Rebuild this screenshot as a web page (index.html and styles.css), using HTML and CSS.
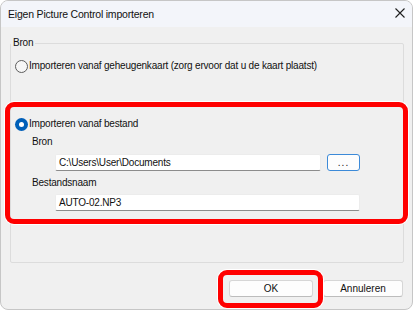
FILE: index.html
```html
<!DOCTYPE html>
<html lang="nl">
<head>
  <meta charset="UTF-8" />
  <title>Eigen Picture Control importeren</title>
  <link rel="stylesheet" href="styles.css">
</head>
<body>
  <div class="window">
    <!-- titelbalk -->
    <div class="titlebar">
      <span class="title">Eigen Picture Control importeren</span>
      <svg class="close" viewBox="0 0 10 10" xmlns="http://www.w3.org/2000/svg">
        <path d="M0.5 0.5L9.5 9.5M9.5 0.5L0.5 9.5" stroke="#1f1f1f" stroke-width="1.1" fill="none"/>
      </svg>
    </div>

    <div class="dialog-body">
      <fieldset class="group">
        <legend>Bron</legend>
        <div class="group-content">
          <label class="radio-row"><span class="radio"></span>Importeren vanaf geheugenkaart (zorg ervoor dat u de kaart plaatst)</label>

          <!-- gemarkeerd gedeelte -->
          <div class="highlight-box">
            <label class="radio-row"><span class="radio checked"></span>Importeren vanaf bestand</label>
            <div class="sub-label">Bron</div>
            <div class="field-row">
              <div class="text-input path">C:\Users\User\Documents</div>
              <button class="browse">...</button>
            </div>
            <div class="sub-label second">Bestandsnaam</div>
            <div class="field-row last">
              <div class="text-input file">AUTO-02.NP3</div>
            </div>
          </div>
        </div>
      </fieldset>

      <div class="button-row">
        <span class="ok-wrap"><button class="btn ok">OK</button></span>
        <button class="btn cancel">Annuleren</button>
      </div>
    </div>
  </div>
</body>
</html>
```

FILE: styles.css
```css
/* ===== pagina ===== */
body{margin:0;background:#fff;font-family:"Liberation Sans",Arial,sans-serif;font-size:10px;line-height:16px;
     letter-spacing:-0.2px;color:#111;}

/* ===== venster ===== */
.window{width:413px;height:310px;box-sizing:border-box;border:1px solid #c6c6c6;border-radius:8px;
        background:#f0f0f0;overflow:hidden;}
.titlebar{height:26px;background:#f3f5fa;display:flex;align-items:center;justify-content:space-between;
          padding:0 7px 0 7px;}
.title{font-size:10.5px;color:#111;}
.close{width:10px;height:10px;margin-top:-2px;}

.dialog-body{padding:8px 8px 0 9px;}

/* ===== groep Bron ===== */
.group{margin:0;padding:0;border:1px solid #dcdcdc;border-radius:2px;}
.group legend{padding:0 2px;line-height:16px;}
.group-content{padding:7px 4px 0 4px;}

.radio-row{display:flex;align-items:center;gap:1px;height:16px;white-space:nowrap;}
.radio{width:11px;height:11px;border:1px solid #5c5c5c;border-radius:50%;background:#f6f6f6;flex:none;}
.radio.checked{width:13px;height:13px;border:none;background:#005fb8;position:relative;}
.radio.checked::after{content:"";position:absolute;left:4px;top:4px;width:5px;height:5px;border-radius:50%;background:#fff;}

/* rode markering */
.highlight-box{margin:28px -9px 38px -10px;padding:9px 0 8px 5px;border:5px solid #ff0000;border-radius:9px;
               box-shadow:0 0 0 1px #fff;}
.sub-label{margin:2px 0 0 17px;height:16px;}
.sub-label.second{margin-top:4px;}
.field-row{display:flex;align-items:center;margin:4px 0 0 40px;}
.field-row.last{margin-top:3px;}

.text-input{height:17px;box-sizing:border-box;background:#fff;border:1px solid #ececec;border-bottom:1px solid #8c8c8c;
            border-radius:2px;padding:0 3px;line-height:15px;font-size:10px;}
.text-input.path{width:266px;}
.text-input.file{width:305px;}
.browse{margin-left:6px;width:33px;height:17px;box-sizing:border-box;background:#fdfdfd;border:1px solid #3c8ad8;
        border-radius:3px;padding:0;font:inherit;line-height:10px;letter-spacing:1px;color:#111;}

/* ===== knoppen ===== */
.button-row{display:flex;justify-content:flex-end;margin-top:17px;padding-right:1px;}
.btn{height:17px;box-sizing:border-box;background:#fdfdfd;border:1px solid #d6d6d6;border-bottom-color:#bcbcbc;
     border-radius:3px;padding:0;font:inherit;line-height:14px;color:#111;}
.btn.ok{width:84px;display:block;}
.btn.cancel{width:80px;margin-left:10px;}
.ok-wrap{position:relative;display:block;}
.ok-wrap::after{content:"";position:absolute;left:-11px;right:-10px;top:-10px;bottom:-11px;
                border:5px solid #ff0000;border-radius:9px;box-shadow:0 0 0 1px #fff;}
```
